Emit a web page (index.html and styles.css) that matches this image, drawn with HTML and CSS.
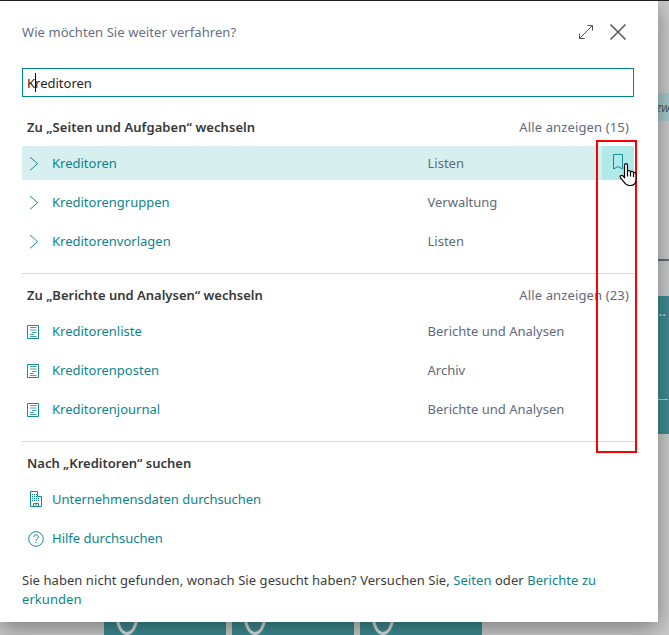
FILE: index.html
```html
<!DOCTYPE html>
<html lang="de">
<head>
<meta charset="utf-8">
<title>Wie möchten Sie weiter verfahren?</title>
<link rel="stylesheet" href="styles.css">
</head>
<body>
<svg class="defs" width="0" height="0">
  <symbol id="chevron" viewBox="0 0 18 18"><path d="M3 3l7.500 6.700L3 16.400"/></symbol>
  <symbol id="report" viewBox="0 0 18 18"><path d="M.5 3.500h11v13H.5z"/><path class="lines" d="M3 5.500h6.500M3 8h6.500M5 10.500h4.500M3 12.500h4M3 14.500h6.500"/></symbol>
</svg>
<div class="backdrop">
  <div class="filter">zw</div>
  <div class="rule"></div>
  <div class="side-tile"><span class="dots">...</span></div>
  <div class="tiles">
    <div class="tile"><i></i></div><div class="tile"><i></i></div><div class="tile"><i></i></div>
  </div>
</div>
<main class="dialog">
  <header class="top">
    <h1 class="title">Wie möchten Sie weiter verfahren?</h1>
    <svg class="expand" viewBox="0 0 16 16"><path d="M1.500 14.500l13-13M9.500 1.500h5v5M1.500 9.500v5h5"/></svg>
    <svg class="close" viewBox="0 0 18 18"><path d="M1.500 1.500l15 15M16.500 1.500l-15 15"/></svg>
  </header>
  <div class="search"><span class="query">Kreditoren</span><span class="caret"></span></div>
  <section class="group first">
    <div class="head"><h2 class="h-pages">Zu „Seiten und Aufgaben“ wechseln</h2><a class="all">Alle anzeigen (15)</a></div>
    <div class="row active"><svg class="icon"><use href="#chevron"/></svg><a>Kreditoren</a><span class="kind">Listen</span>
      <span class="mark"><svg viewBox="0 0 12 18"><path d="M1.500 1.500h9v14.500L6 13.500 1.500 16z"/></svg></span></div>
    <div class="row"><svg class="icon"><use href="#chevron"/></svg><a>Kreditorengruppen</a><span class="kind">Verwaltung</span></div>
    <div class="row"><svg class="icon"><use href="#chevron"/></svg><a>Kreditorenvorlagen</a><span class="kind">Listen</span></div>
  </section>
  <section class="group">
    <div class="head"><h2 class="h-reports">Zu „Berichte und Analysen“ wechseln</h2><a class="all">Alle anzeigen (23)</a></div>
    <div class="row"><svg class="icon"><use href="#report"/></svg><a>Kreditorenliste</a><span class="kind">Berichte und Analysen</span></div>
    <div class="row"><svg class="icon"><use href="#report"/></svg><a>Kreditorenposten</a><span class="kind">Archiv</span></div>
    <div class="row"><svg class="icon"><use href="#report"/></svg><a>Kreditorenjournal</a><span class="kind">Berichte und Analysen</span></div>
  </section>
  <section class="group">
    <div class="head"><h2 class="h-find">Nach „Kreditoren“ suchen</h2></div>
    <div class="row"><svg class="icon" viewBox="0 0 18 18"><path d="M3.500 1.500h7v5h4v10h-11zM6.500 16v-2.500h5V16M9 14v2"/><path class="dotted" d="M5 4.500h5M5 6.500h5M5 8.500h7M5 10.500h8"/></svg><a class="wide">Unternehmensdaten durchsuchen</a></div>
    <div class="row"><svg class="icon" viewBox="0 0 18 18"><circle cx="9" cy="10" r="7.300"/><path d="M6.700 8.100c0-3 4.700-3 4.700-.3 0 1.800-2.300 1.800-2.300 4M9.100 13v1.200"/></svg><a>Hilfe durchsuchen</a></div>
  </section>
  <p class="hint">Sie haben nicht gefunden, wonach Sie gesucht haben? Versuchen Sie, <a>Seiten</a> oder <a>Berichte zu<br>erkunden</a></p>
</main>
<div class="highlight"></div>
<svg class="pointer" viewBox="0 0 20 26"><path d="M6.500 15.500V3.500c0-2.400 3-2.400 3 0v6c.5-1.500 2.700-1.300 3 .4.700-1 2.600-.8 3 .8 1-.7 2.500 0 2.500 1.500v5.300c0 3.500-2 6-5.500 6h-1.500c-2.500 0-3.700-1.500-5-3.500L2.500 16c-1.300-2 .7-3.400 2.300-2.200zM9.500 9v5.500M12.500 10v4.500M15.500 11v4"/></svg>
</body>
</html>
```
FILE: styles.css
```css
* { box-sizing: border-box; }
body {
  margin: 0;
  width: 669px;
  height: 635px;
  position: relative;
  overflow: hidden;
  background: #cbcbcb;
  font: 13px/20px "Noto Sans", "Open Sans", sans-serif;
  color: #3c3c3c;
}
.defs { position: absolute; }
a { color: #0b858b; }

/* Dimmed page behind the dialog */
.backdrop { position: absolute; inset: 0; border-top: 1px solid #222; }
.filter {
  position: absolute; left: 600px; right: 0; top: 92px; height: 28px;
  padding-left: 56px; background: #a5cacc; color: #555b62;
  font-style: italic; font-size: 12px; line-height: 29px;
}
.rule { position: absolute; left: 600px; right: 0; top: 258px; height: 2px; background: #666b78; }
.side-tile { position: absolute; left: 600px; right: 0; top: 295px; height: 138px; background: #3e8c91; }
.side-tile::after { content: ""; position: absolute; left: 0; right: 1px; top: 103px; height: 1px; background: #b5cccd; }
.dots { position: absolute; left: 55px; top: 5px; color: #c5d5d6; font-weight: 600; }
.tiles { position: absolute; left: 104px; bottom: 0; display: flex; gap: 6px; }
.tile { width: 122px; height: 40px; background: #3e8c91; padding: 4px 0 0 12px; }
.tile i {
  display: block; width: 22px; height: 36px;
  border: 3px solid #d8dcdc; border-radius: 50%;
}

.dialog {
  position: absolute; left: 0; top: 1px;
  width: 658px; height: 621px;
  padding: 0 24px 0 22px;
  background: #fff;
  box-shadow: 0 6px 22px rgba(0, 0, 0, .4);
}
.top { display: flex; align-items: center; height: 67px; padding: 0 7px 5px 0; }
.title { flex: 1; margin: 0; font-size: 13px; font-weight: 400; letter-spacing: .065px; color: #667083; }
.expand, .close { fill: none; stroke: #555; }
.expand { width: 16px; height: 16px; margin-right: 15px; }
.close { width: 18px; height: 18px; stroke-width: 1.5; }
.search {
  position: relative; height: 29px; padding: 0 4px;
  border: 1px solid #008489; line-height: 28px; color: #252525;
}
.caret { position: absolute; left: 12px; top: 4px; width: 1px; height: 19px; background: #000; }

.group { padding-bottom: 15px; border-bottom: 1px solid #d5d5d5; }
.group:last-of-type { border: 0; padding-bottom: 0; }
.head { display: flex; justify-content: space-between; align-items: center; height: 40px; padding: 2px 5px 0; }
.first .head { height: 49px; padding-top: 11px; }
h2 { margin: 0; font-size: 13px; font-weight: 600; color: #383838; }
.h-pages { letter-spacing: .065px; }
.all { color: #616b7c; letter-spacing: .14px; }
.row { display: flex; align-items: center; height: 34px; padding-left: 5px; }
.row + .row { margin-top: 5px; }
.active { background: #d8eff0; }
.icon { width: 18px; height: 18px; margin-right: 7px; fill: none; stroke: #168d93; }
.dotted { stroke-dasharray: 1 1; }
.lines { stroke-width: .8; }
.row a { width: 375.5px; white-space: nowrap; }
.row .wide { letter-spacing: -.035px; }
.kind { flex: 1; color: #616b7c; }
.mark { width: 32px; height: 34px; padding: 7px 0 0 10px; background: #b2e9eb; }
.mark svg { display: block; width: 12px; height: 18px; fill: none; stroke: #168d93; }
.hint { margin: 16px 0 0; line-height: 19px; white-space: nowrap; letter-spacing: .06px; }

/* Annotation frame and mouse pointer */
.highlight { position: absolute; left: 596px; top: 140px; width: 41px; height: 313px; border: 2px solid #f00; }
.pointer { position: absolute; left: 618px; top: 162px; width: 20px; height: 26px; fill: #fff; stroke: #000; stroke-width: 1.200; }
```
